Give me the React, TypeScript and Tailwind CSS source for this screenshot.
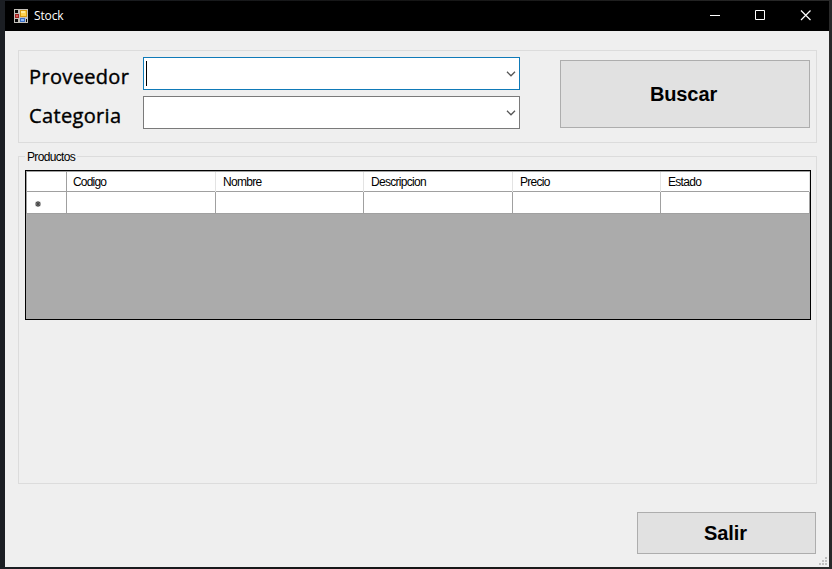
const columns = ['Codigo', 'Nombre', 'Descripcion', 'Precio', 'Estado'];
const grid = 'grid grid-cols-[40px_149px_148px_149px_148px_149px]';
const sans = "font-['Liberation_Sans',Arial,sans-serif]";

function AppIcon() {
  return (
    <svg width="14" height="14" viewBox="0 0 14 14" shapeRendering="crispEdges">
      <rect width="14" height="14" fill="#c4c1bb" />
      <path d="M1 1h3v3H1zM1 10h3v3H1zM12 10h1v3h-1z" fill="#080808" />
      <rect x="1" y="5" width="4" height="4" fill="#9c2020" />
      <rect x="2" y="6" width="2" height="2" fill="#d8605a" />
      <rect x="6" y="1" width="7" height="7" fill="#d69a10" />
      <rect x="7" y="2" width="5" height="5" fill="#ffd34e" />
      <rect x="7" y="2" width="4" height="2" fill="#ffec9c" />
      <rect x="6" y="9" width="5" height="4" fill="#3c6fc4" />
      <rect x="7" y="10" width="3" height="2" fill="#8db8f5" />
    </svg>
  );
}

function Chevron() {
  return (
    <svg width="10" height="6" viewBox="0 0 10 6" fill="none" stroke="#555" strokeWidth="1.3">
      <path d="M1 .8 5 4.8 9 .8" />
    </svg>
  );
}

function TitleBar() {
  return (
    <header className="flex h-[30px] items-center bg-black pl-[9px] text-white">
      <AppIcon />
      <span className="ml-[6px] font-['Open_Sans','Noto_Sans',sans-serif] text-[12px] leading-[16px] tracking-[-0.15px]">Stock</span>
      <div className="ml-auto flex items-center pr-[17px]">
        <svg width="102" height="12" viewBox="0 0 102 12" fill="none" stroke="#fff">
          <path d="M0 5.5h10" />
          <path d="M45.5.5h9v9h-9z" />
          <path d="M91 .5l9.5 9.5M100.500.5 91 10" strokeWidth="1.2" />
        </svg>
      </div>
    </header>
  );
}

export default function App() {
  return (
    <div className="h-[569px] w-[832px] overflow-hidden bg-gradient-to-r from-[#1b1e23] via-[#151515] to-[#292929] pl-[5px] pr-[3px] pt-px">
      <div className="flex h-[566px] w-[824px] flex-col bg-[#efefef] text-black">
        <TitleBar />
        <main className="relative flex flex-1 flex-col pl-[13px] pr-[12px] pt-[19px]">
          <section className="flex h-[93px] border border-[#dcdcdc] pl-[10px] pt-[6px]">
            <div className="flex w-[114px] flex-col font-['Open_Sans','Noto_Sans',sans-serif] text-[20px] tracking-[0.35px] [-webkit-text-stroke:0.4px_black]">
              <label className="h-[39px] leading-[39px]">Proveedor</label>
              <label className="h-[39px] leading-[39px]">Categoria</label>
            </div>
            <div className="flex flex-col gap-[6px]">
              <div className="flex h-[33px] w-[377px] items-center justify-between border border-solid border-[#0f7ab8] bg-white pl-[2px] pr-[3px]">
                <span className="mb-px h-[25px] w-px bg-black" />
                <Chevron />
              </div>
              <div className="flex h-[33px] w-[377px] items-center justify-end border border-solid border-[#7a7a7a] bg-white pr-[3px]">
                <Chevron />
              </div>
            </div>
            <button className={`ml-[40px] mt-[3px] h-[68px] w-[250px] border border-[#adadad] bg-[#e1e1e1] text-[20px] font-bold tracking-[-0.1px] ${sans}`}>
              <span className="pr-[3px]">Buscar</span>
            </button>
          </section>

          <section className="mt-[13px] h-[328px] border border-[#dcdcdc] pl-[6px]">
            <div className={`-mt-[7px] flex h-[14px] ${sans} text-[12px] leading-[14px]`}>
              <span className="bg-[#efefef] px-[2px] tracking-[-0.65px]">Productos</span>
            </div>
            <div className={`mt-[6px] h-[150px] w-[786px] border border-black bg-[#ababab] ${sans} text-[12px]`}>
              <div className={`${grid} h-[21px] border-b border-l border-t border-[#a0a0a0] bg-white`}>
                <span className="border-r border-[#a0a0a0]" />
                {columns.map((name) => (
                  <span key={name} className="border-r border-[#e3e3e3] pl-[7px] leading-[21px] tracking-[-0.7px] nth-2:pl-[6px] nth-2:tracking-[-0.8px]">
                    {name}
                  </span>
                ))}
              </div>
              <div className={`${grid} h-[22px] border-b border-l border-[#a0a0a0] bg-white`}>
                <span className="flex items-center border-r border-[#a0a0a0] pl-[8px] pt-[2px]">
                  <svg width="6" height="6" viewBox="0 0 6 6" stroke="#4a4a4a" strokeWidth="1.2">
                    <path d="M3 0v6M0 3h6M.8.8l4.4 4.4M5.200.8.8 5.2" />
                  </svg>
                </span>
                {columns.map((name) => (
                  <span key={name} className="border-r border-[#a0a0a0]" />
                ))}
              </div>
            </div>
          </section>

          <button className={`mr-px mt-[28px] h-[42px] w-[179px] self-end border border-[#adadad] bg-[#e1e1e1] text-[20px] font-bold tracking-[-0.1px] ${sans}`}>
            <span className="pr-[2px]">Salir</span>
          </button>
          <svg className="absolute bottom-[2px] right-[2px]" width="8" height="8" viewBox="0 0 8 8" fill="#bfbfbf">
            <path d="M6 0h2v2H6zM3 3h2v2H3zM6 3h2v2H6zM0 6h2v2H0zM3 6h2v2H3zM6 6h2v2H6z" />
          </svg>
        </main>
      </div>
    </div>
  );
}
